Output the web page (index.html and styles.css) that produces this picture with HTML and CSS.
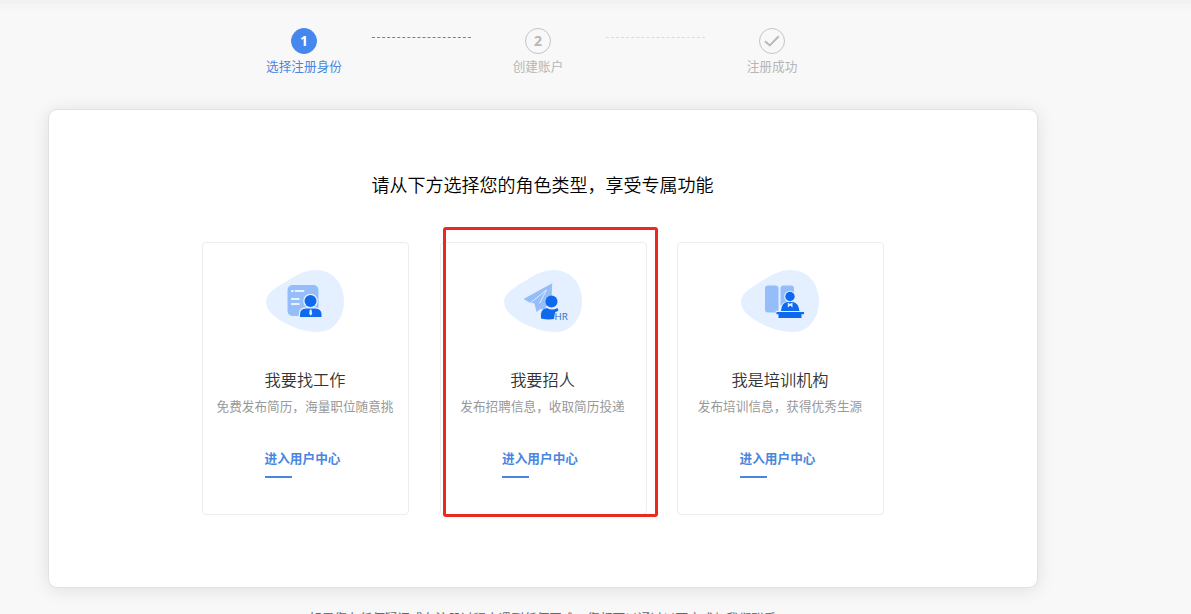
FILE: index.html
```html
<!DOCTYPE html>
<html lang="zh-CN">
	<head>
		<meta charset="UTF-8">
		<title>注册</title>
		<link rel="stylesheet" href="styles.css">
	</head>
	<body>
		<div class="header"></div>
		<div class="steps">
			<div class="step active">
				<div class="num">1</div>
				<p>选择注册身份</p>
			</div>
			<svg class="line current" width="100" height="1"><path d="M1 .5H100"/></svg>
			<div class="step">
				<div class="num">2</div>
				<p>创建账户</p>
			</div>
			<svg class="line" width="100" height="1"><path d="M1 .5H100"/></svg>
			<div class="step">
				<div class="num">
					<svg width="16" height="12" viewBox="0 0 16 12"><path d="M1 6.2L5.8 10.4L14.8 1.2"/></svg>
				</div>
				<p>注册成功</p>
			</div>
		</div>
		<div class="box">
			<h2>请从下方选择您的角色类型，享受专属功能</h2>
			<div class="roles">
				<div class="role">
					<svg class="icon" viewBox="0 0 100 80">
						<path class="blob" d="M11 41.5C11 33 22 27 32 21C43 14 50 10 61 10C78 10 89 24 89 41C89 59 78 72 63 72C50 72 39 68 28 62C18 56 11 50 11 41.5Z"/>
						<rect class="light" x="32.5" y="25" width="31" height="31" rx="5"/>
						<path class="lines" d="M36.8 31h1M40.5 31h8M36.8 39h7M36.8 44h7"/>
						<g class="halo">
							<circle cx="55.5" cy="41" r="6"/>
							<path d="M45 57V54.5Q45 48.5 51 48.5H60Q66.5 48.5 66.5 54.5V57Z"/>
						</g>
						<circle class="dark" cx="55.5" cy="41" r="6"/>
						<path class="dark" d="M45 57V54.5Q45 48.5 51 48.5H60Q66.5 48.5 66.5 54.5V57Z"/>
						<path class="tie" d="M54.8 49.5h1.7l.7 4.3l-1.5 1.9l-1.5-1.9Z"/>
					</svg>
					<h3>我要找工作</h3>
					<p>免费发布简历，海量职位随意挑</p>
					<a>进入用户中心</a>
				</div>
				<div class="role">
					<svg class="icon" viewBox="0 0 100 80">
						<path class="blob" d="M11 41.5C11 33 22 27 32 21C43 14 50 10 61 10C78 10 89 24 89 41C89 59 78 72 63 72C50 72 39 68 28 62C18 56 11 50 11 41.5Z"/>
						<path class="light" d="M30.5 39L59.2 23.2L58.5 40L51 49.5L47.5 49L43.5 52L41.5 43.5L36.5 42.5Z"/>
						<path class="fold" d="M53.5 30L37.5 42.8M53.5 30L46.5 43.5"/>
						<circle class="dark" cx="58.5" cy="41.5" r="6"/>
						<path class="dark" d="M48 58.5Q46.5 49 54 48Q59 51 64.5 48L65.5 50.5L62 52.5L61 59Q55 60 48 58.5Z"/>
						<text x="61.5" y="59.5">HR</text>
					</svg>
					<h3>我要招人</h3>
					<p>发布招聘信息，收取简历投递</p>
					<a>进入用户中心</a>
					<div class="mark"></div>
				</div>
				<div class="role">
					<svg class="icon" viewBox="0 0 100 80">
						<path class="blob" d="M11 41.5C11 33 22 27 32 21C43 14 50 10 61 10C78 10 89 24 89 41C89 59 78 72 63 72C50 72 39 68 28 62C18 56 11 50 11 41.5Z"/>
						<rect class="light" x="35" y="25.5" width="13.5" height="27" rx="3"/>
						<rect class="light" x="50.5" y="25.5" width="13.5" height="22" rx="3"/>
						<g class="halo">
							<circle cx="60" cy="36.5" r="4.5"/>
							<path d="M51 52Q51 42.5 60 42.5Q69 42.5 69 52ZM47 52H74V54.5L71 58H49L47 54.5Z"/>
						</g>
						<circle class="dark" cx="60" cy="36.5" r="4.7"/>
						<path class="dark" d="M51 51Q51.5 42.5 57.5 42H62.5Q68.5 42.5 69.5 51ZM46.5 52H74V54.3H71.5V58H48.5V54.3H46.5Z"/>
						<path class="tie" d="M57.8 42.5L60 44L62.4 42.5L62.6 47.5L60.2 45.5L57.8 47.5Z"/>
					</svg>
					<h3>我是培训机构</h3>
					<p>发布培训信息，获得优秀生源</p>
					<a>进入用户中心</a>
				</div>
			</div>
		</div>
		<div class="tips">如果您有任何疑问或在注册过程中遇到任何困难，您都可以通过以下方式与我们联系</div>
	</body>
</html>
```

FILE: styles.css
```css
*{
	margin: 0;
	padding: 0;
	box-sizing: border-box;
}
body{
	height: 614px;
	overflow: hidden;
	background-color: #f8f8f8;
	font-family: "Liberation Sans","Noto Sans CJK SC",sans-serif;
	font-size: 12.65px;
	font-weight: 400;
}
.header{
	height: 12px;
	background: linear-gradient(#f2f2f2 0,#f2f2f2 4px,#f5f5f5 4px,#f8f8f8 12px);
}
.steps{
	display: flex;
	width: 602px;
	height: 97px;
	margin-left: 237px;
	padding-top: 16px;
}
.step{
	width: 134px;
	text-align: center;
	color: #b6b6b6;
}
.num{
	display: flex;
	align-items: center;
	justify-content: center;
	width: 26px;
	height: 26px;
	margin: 0 auto;
	padding-bottom: 1px;
	border: 1px solid #c4c4c4;
	border-radius: 50%;
	font-family: "Open Sans",sans-serif;
	font-size: 14px;
	font-weight: bold;
}
.num svg{
	fill: none;
	stroke: #b9b9b9;
	stroke-width: 2;
}
.step p{
	margin-top: 4px;
	line-height: 19px;
}
.step.active{
	color: #4a86e0;
}
.step.active .num{
	border-color: #4587ee;
	background-color: #4587ee;
	color: #fff;
}
.line{
	margin-top: 9px;
	stroke: #dadada;
	stroke-dasharray: 3 2.05;
}
.line.current{
	stroke: #3f8ce0;
}
.box{
	width: 990px;
	height: 479px;
	margin-left: 48px;
	padding-top: 63px;
	border: 1px solid #e2e2e3;
	border-radius: 9px;
	background-color: #fff;
	box-shadow: 0 2px 18px rgba(0,0,0,.1);
}
.box h2{
	padding-right: 1px;
	line-height: 26px;
	text-align: center;
	font-size: 18px;
	font-weight: 350;
	color: #000;
}
.roles{
	display: flex;
	justify-content: center;
	gap: 30.5px;
	margin-top: 43px;
}
.role{
	position: relative;
	width: 207px;
	height: 273px;
	padding: 17px 1px 0 0;
	border: 1px solid #ededed;
	border-radius: 4px;
	text-align: center;
}
.icon{
	display: block;
	width: 100px;
	height: 80px;
	margin: 0 auto;
}
.blob{
	fill: #e4f0ff;
}
.light{
	fill: #94bdf9;
}
.dark{
	fill: #0f69ed;
}
.tie{
	fill: #e4f0ff;
}
.lines{
	fill: none;
	stroke: #e9f3ff;
	stroke-width: 1.8;
	stroke-linecap: round;
}
.fold{
	fill: none;
	stroke: #e4f0ff;
	stroke-width: .9;
}
.halo{
	fill: #e4f0ff;
	stroke: #e4f0ff;
	stroke-width: 2.6;
}
.icon text{
	font-family: "Open Sans",sans-serif;
	font-size: 9.8px;
	font-weight: 400;
	fill: #2c6fc4;
}
.role h3{
	margin-top: 28px;
	line-height: 24px;
	font-size: 16.2px;
	font-weight: 350;
	color: #333;
}
.role p{
	margin-top: 6px;
	line-height: 19px;
	white-space: nowrap;
	color: #999;
}
.role a{
	display: block;
	width: 76px;
	margin: 33px 0 0 61.5px;
	line-height: 18px;
	font-weight: bold;
	white-space: nowrap;
	color: #4a86e0;
}
.role a::after{
	content: "";
	display: block;
	width: 27px;
	height: 2px;
	margin-top: 8px;
	background-color: #4a86e0;
}
/* 选中框 */
.mark{
	position: absolute;
	top: -16px;
	left: 2px;
	width: 215px;
	height: 290px;
	border: 3px solid #ea2a1e;
	border-radius: 3px;
}
.tips{
	margin: 22px 0 0 309px;
	line-height: 19px;
	white-space: nowrap;
	color: #666;
}
```
